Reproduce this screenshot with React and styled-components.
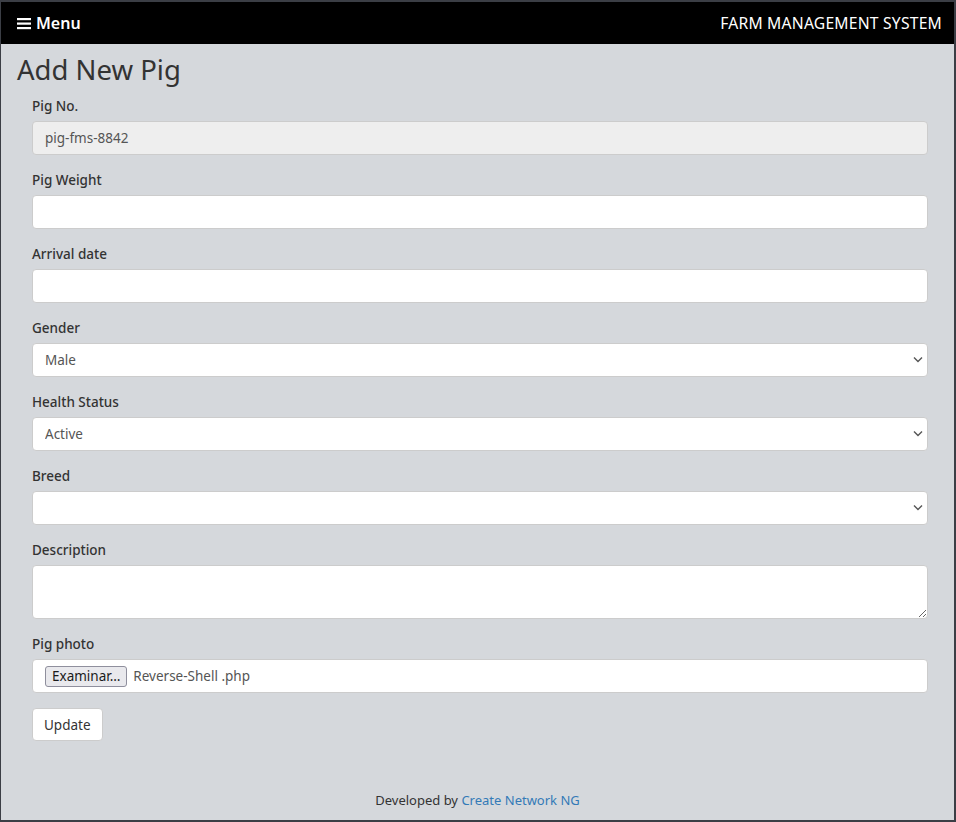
import React from 'react';
import styled, { createGlobalStyle } from 'styled-components';

const GlobalStyle = createGlobalStyle`
  html, body {
    margin: 0;
    padding: 0;
    background: #d5d8dc;
  }
  * {
    box-sizing: border-box;
  }
`;

const Frame = styled.div`
  height: 822px;
  display: flex;
  flex-direction: column;
  border-style: solid;
  border-color: #3b3e45;
  border-width: 2px 2px 2px 1px;
  background-color: #d5d8dc;
  font-family: 'Noto Sans', 'Open Sans', sans-serif;
  color: #333333;
`;

const NavBar = styled.nav`
  height: 42px;
  flex-shrink: 0;
  background-color: #000000;
  color: #ffffff;
  display: flex;
  align-items: center;
  justify-content: space-between;
  padding: 0 12px 0 16px;
`;

const MenuToggle = styled.div`
  display: flex;
  align-items: center;
  gap: 5px;
  font-size: 16px;
  font-weight: 600;
`;

const Brand = styled.div`
  font-size: 15.7px;
  letter-spacing: 0.2px;
`;

const Main = styled.main`
  padding: 0 26px 0 16px;
`;

const Heading = styled.h1`
  margin: 8px 0 8px 0;
  font-size: 27.5px;
  line-height: 36px;
  font-weight: 400;
  color: #333333;
`;

const Form = styled.form`
  padding-left: 15px;
  display: flex;
  flex-direction: column;
`;

const Group = styled.div`
  display: flex;
  flex-direction: column;
  margin-bottom: 15px;
`;

const Label = styled.label`
  font-size: 13.5px;
  font-weight: 500;
  line-height: 20px;
  margin-bottom: 5px;
  color: #333333;
`;

const Field = styled.input`
  height: 34px;
  width: 100%;
  padding: 6px 12px;
  font-family: inherit;
  font-size: 13.5px;
  color: #555555;
  background-color: ${(p) => (p.readOnly ? '#eeeeee' : '#ffffff')};
  border: 1px solid #cccccc;
  border-radius: 4px;
  outline: none;
`;

const SelectWrap = styled.div`
  position: relative;
`;

const Select = styled.select`
  appearance: none;
  height: 34px;
  width: 100%;
  padding: 6px 12px;
  font-family: inherit;
  font-size: 13.5px;
  color: #555555;
  background-color: #ffffff;
  border: 1px solid #cccccc;
  border-radius: 4px;
  outline: none;
`;

const Chevron = styled.svg`
  position: absolute;
  right: 5px;
  top: 13px;
  pointer-events: none;
`;

const TextArea = styled.textarea`
  height: 54px;
  width: 100%;
  padding: 6px 12px;
  font-family: inherit;
  font-size: 13.5px;
  color: #555555;
  background-color: #ffffff;
  border: 1px solid #cccccc;
  border-radius: 4px;
  outline: none;
  resize: vertical;
`;

const FileBox = styled.div`
  height: 34px;
  display: flex;
  align-items: center;
  gap: 6px;
  padding: 0 12px;
  background-color: #ffffff;
  border: 1px solid #cccccc;
  border-radius: 4px;
  font-size: 13.5px;
  color: #555555;
`;

const FileButton = styled.button`
  height: 21px;
  padding: 0 6px;
  font-family: 'Noto Sans', sans-serif;
  font-size: 13.5px;
  color: #1b1b1b;
  background-color: #e9e9ed;
  border: 1px solid #8f8f9d;
  border-radius: 3px;
`;

const SubmitButton = styled.button`
  align-self: flex-start;
  height: 33px;
  padding: 0 11px;
  font-family: inherit;
  font-size: 13.5px;
  color: #333333;
  background-color: #ffffff;
  border: 1px solid #cccccc;
  border-radius: 4px;
  cursor: pointer;
`;

const Footer = styled.footer`
  margin-top: auto;
  padding-bottom: 11px;
  text-align: center;
  font-size: 13px;
  color: #333333;

  a {
    color: #337ab7;
    text-decoration: none;
  }
`;

const ChevronIcon = () => (
  <Chevron width="10" height="7" viewBox="0 0 10 7">
    <path d="M1 1.5 L5 5.5 L9 1.5" fill="none" stroke="#555" strokeWidth="1.4" />
  </Chevron>
);

const SelectField = ({ value, options }) => (
  <SelectWrap>
    <Select defaultValue={value}>
      {options.map((o) => (
        <option key={o}>{o}</option>
      ))}
    </Select>
    <ChevronIcon />
  </SelectWrap>
);

export default function App() {
  return (
    <>
      <GlobalStyle />
      <Frame>
        <NavBar>
          <MenuToggle>
            <svg width="14" height="13" viewBox="0 0 14 13">
              <rect x="0" y="1" width="14" height="2.2" fill="#fff" />
              <rect x="0" y="5.5" width="14" height="2.2" fill="#fff" />
              <rect x="0" y="10" width="14" height="2.2" fill="#fff" />
            </svg>
            Menu
          </MenuToggle>
          <Brand>FARM MANAGEMENT SYSTEM</Brand>
        </NavBar>
        <Main>
          <Heading>Add New Pig</Heading>
          <Form onSubmit={(e) => e.preventDefault()}>
            <Group>
              <Label>Pig No.</Label>
              <Field readOnly defaultValue="pig-fms-8842" />
            </Group>
            <Group>
              <Label>Pig Weight</Label>
              <Field />
            </Group>
            <Group>
              <Label>Arrival date</Label>
              <Field />
            </Group>
            <Group>
              <Label>Gender</Label>
              <SelectField value="Male" options={['Male', 'Female']} />
            </Group>
            <Group>
              <Label>Health Status</Label>
              <SelectField value="Active" options={['Active', 'Sick', 'Dead']} />
            </Group>
            <Group>
              <Label>Breed</Label>
              <SelectField value="" options={['']} />
            </Group>
            <Group>
              <Label>Description</Label>
              <TextArea />
            </Group>
            <Group>
              <Label>Pig photo</Label>
              <FileBox>
                <FileButton type="button">Examinar…</FileButton>
                <span>Reverse-Shell .php</span>
              </FileBox>
            </Group>
            <SubmitButton type="submit">Update</SubmitButton>
          </Form>
        </Main>
        <Footer>
          Developed by <a href="#">Create Network NG</a>
        </Footer>
      </Frame>
    </>
  );
}
